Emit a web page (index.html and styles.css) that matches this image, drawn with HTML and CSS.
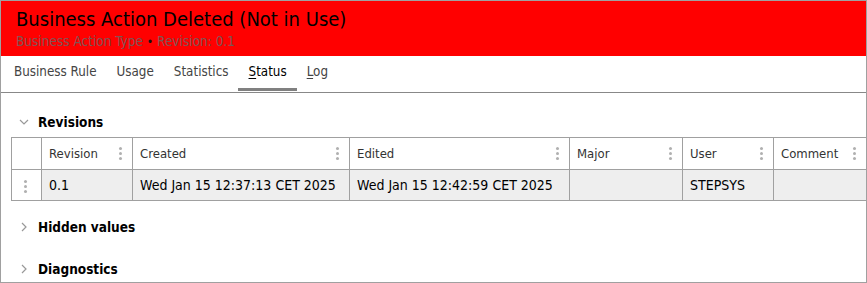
FILE: index.html
```html
<!DOCTYPE html>
<html>
<head>
<meta charset="utf-8">
<link rel="stylesheet" href="styles.css">
</head>
<body>
<div class="frame">
  <header class="banner">
    <div class="title">Business Action Deleted (Not in Use)</div>
    <div class="subtitle">Business Action Type <span class="dot">•</span> Revision: 0.1</div>
  </header>
  <nav class="tabs">
    <span class="tab">Business Rule</span>
    <span class="tab">Usage</span>
    <span class="tab">Statistics</span>
    <span class="tab active"><u>S</u>tatus</span>
    <span class="tab"><u>L</u>og</span>
  </nav>
  <main class="content">
    <div class="section open">
      <svg class="chev" width="10" height="10" viewBox="0 0 10 10"><path d="M1 3 L5 7 L9 3" fill="none" stroke="#999" stroke-width="1.2"/></svg>
      <span class="sec-title">Revisions</span>
    </div>
    <table class="grid">
      <colgroup>
        <col style="width:30px"><col style="width:91px"><col style="width:217px"><col style="width:220px"><col style="width:113px"><col style="width:91px"><col>
      </colgroup>
      <thead>
        <tr>
          <th></th>
          <th><span>Revision</span><i class="kebab"></i></th>
          <th><span>Created</span><i class="kebab"></i></th>
          <th><span>Edited</span><i class="kebab"></i></th>
          <th><span>Major</span><i class="kebab"></i></th>
          <th><span>User</span><i class="kebab"></i></th>
          <th><span>Comment</span><i class="kebab"></i></th>
        </tr>
      </thead>
      <tbody>
        <tr>
          <td class="rowhead"><i class="kebab"></i></td>
          <td>0.1</td>
          <td>Wed Jan 15 12:37:13 CET 2025</td>
          <td>Wed Jan 15 12:42:59 CET 2025</td>
          <td></td>
          <td>STEPSYS</td>
          <td></td>
        </tr>
      </tbody>
    </table>
    <div class="section closed first">
      <svg class="chev" width="10" height="10" viewBox="0 0 10 10"><path d="M3 1 L7 5 L3 9" fill="none" stroke="#999" stroke-width="1.2"/></svg>
      <span class="sec-title">Hidden values</span>
    </div>
    <div class="section closed">
      <svg class="chev" width="10" height="10" viewBox="0 0 10 10"><path d="M3 1 L7 5 L3 9" fill="none" stroke="#999" stroke-width="1.2"/></svg>
      <span class="sec-title">Diagnostics</span>
    </div>
  </main>
</div>
</body>
</html>
```
FILE: styles.css
```css
html, body {
  margin: 0;
  padding: 0;
  background: #fff;
}
body {
  font-family: "DejaVu Sans Condensed", "DejaVu Sans", sans-serif;
  color: #000;
}
.frame {
  width: 867px;
  height: 283px;
  box-sizing: border-box;
  border: 1px solid #a0a0a0;
  overflow: hidden;
}
.banner {
  background: #ff0000;
  height: 55px;
  box-sizing: border-box;
  padding: 5px 0 0 15px;
}
.title {
  font-size: 20px;
  line-height: 26px;
  color: #000;
}
.subtitle {
  font-size: 13.5px;
  line-height: 18px;
  color: #7d5555;
}
.subtitle .dot {
  color: #111;
  font-size: 12px;
}
.tabs {
  display: flex;
  height: 36px;
  border-bottom: 1px solid #888;
  padding-left: 13px;
}
.tab {
  font-size: 13.3px;
  color: #444;
  margin-right: 20px;
  line-height: 32px;
  position: relative;
}
.tab.active {
  color: #000;
}
.tab.active::after {
  content: "";
  position: absolute;
  left: -11px;
  right: -10px;
  bottom: 1px;
  height: 3px;
  background: #808080;
}
.tab u {
  text-decoration-thickness: 1px;
  text-underline-offset: 2px;
}
.content {
  padding: 21px 0 0 10px;
}
.section {
  display: flex;
  align-items: center;
  gap: 9px;
  padding-left: 8px;
}
.section.open {
  height: 16px;
  margin-bottom: 7px;
}
.section.closed {
  height: 42px;
}
.section.first {
  margin-top: 5px;
}
.chev {
  flex: none;
}
.sec-title {
  font-weight: bold;
  font-size: 13.5px;
}
.grid {
  border-collapse: collapse;
  table-layout: fixed;
  width: 856px;
  font-size: 13px;
}
.grid th, .grid td {
  border: 1px solid #a0a0a0;
  padding: 0 0 0 7px;
  text-align: left;
  font-weight: normal;
  white-space: nowrap;
  overflow: hidden;
}
.grid th {
  height: 31px;
  color: #333;
  position: relative;
}
.grid td {
  height: 30px;
  background: #eeeeee;
  font-size: 14px;
}
.grid td.rowhead {
  background: #fff;
  padding: 0;
  text-align: center;
}
.grid th span {
  display: inline-block;
}
.kebab {
  display: inline-block;
  width: 3px;
  height: 3px;
  border-radius: 50%;
  background: #b0b0b0;
  box-shadow: 0 -5px 0 #b0b0b0, 0 5px 0 #b0b0b0;
  vertical-align: middle;
}
.grid th .kebab {
  position: absolute;
  right: 10px;
  top: 14px;
}
.grid td.rowhead .kebab {
  margin-left: -2px;
}
```
